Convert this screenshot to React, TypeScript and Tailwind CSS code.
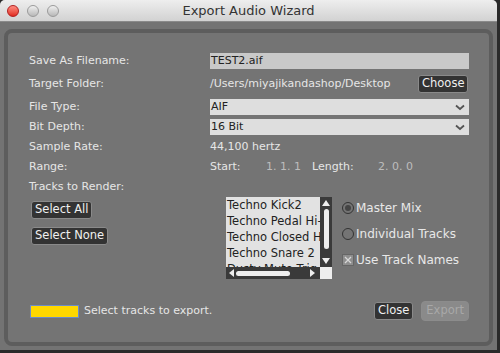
import React from 'react';

const font = { fontFamily: '"DejaVu Sans", "Liberation Sans", sans-serif' };

const Chevron = () => (
  <svg width="10" height="7" viewBox="0 0 10 7" className="mr-[3px]">
    <path d="M1 1.5 L5 5 L9 1.5" stroke="#555" strokeWidth="1.8" fill="none" />
  </svg>
);

const Label = ({ children }: any) => (
  <div className="w-[181px] shrink-0 text-[#e6e6e6]">{children}</div>
);

const DarkButton = ({ children, className = '' }: any) => (
  <div
    className={
      'flex h-[18px] items-center rounded-[3px] border border-[#8a8a8a] bg-[#333333] px-[3px] text-[11.5px] text-[#f0f0f0] ' +
      className
    }
  >
    {children}
  </div>
);

const Radio = ({ on, children }: any) => (
  <div className="flex h-[14px] items-center gap-[2px] text-[#e8e8e8]">
    <div className="flex h-[12px] w-[12px] items-center justify-center rounded-full border-[1.5px] border-[#333]">
      {on && <div className="h-[6px] w-[6px] rounded-full bg-[#444]" />}
    </div>
    <span>{children}</span>
  </div>
);

export default function App() {
  const tracks = ['Techno Kick2', 'Techno Pedal Hi-Hat', 'Techno Closed Hi-Hat', 'Techno Snare 2', 'Dusty Mute Trig'];

  return (
    <div className="h-[353px] w-[500px] overflow-hidden bg-[#2a2a2a] text-[11px]" style={font}>
      <div className="h-[350px] w-[497px] overflow-hidden rounded-t-[5px] bg-[#737373]">
        {/* title bar */}
        <div className="relative flex h-[22px] items-center justify-center border-b border-[#8a8a8a] bg-gradient-to-b from-[#eeeeee] to-[#d2d2d2]">
          <div className="absolute left-[7px] top-[5px] flex gap-[8px]">
            <div className="h-[12px] w-[12px] rounded-full border border-[#b02020] bg-gradient-to-b from-[#ff8a80] to-[#e0271d]" />
            <div className="h-[12px] w-[12px] rounded-full border border-[#9a9a9a] bg-gradient-to-b from-[#f0f0f0] to-[#b8b8b8]" />
            <div className="h-[12px] w-[12px] rounded-full border border-[#9a9a9a] bg-gradient-to-b from-[#f0f0f0] to-[#b8b8b8]" />
          </div>
          <span className="text-[13px] text-[#333]">Export Audio Wizard</span>
        </div>

        {/* body */}
        <div className="px-[4px] pt-[7px]">
          <div className="h-[317px] rounded-[8px] border-[4px] border-[#5d5d5d] bg-[#747474] pl-[21px] pt-[20px]">
            <div className="flex h-[16px] items-center">
              <Label>Save As Filename:</Label>
              <div className="flex h-[16px] w-[259px] items-center bg-[#c9c9c9] px-[1px] text-[#222]">TEST2.aif</div>
            </div>
            <div className="mt-[6px] flex h-[18px] items-center">
              <Label>Target Folder:</Label>
              <div className="w-[208px] text-[#e6e6e6]">/Users/miyajikandashop/Desktop</div>
              <DarkButton>Choose</DarkButton>
            </div>
            <div className="mt-[6px] flex h-[16px] items-center">
              <Label>File Type:</Label>
              <div className="flex h-[16px] w-[259px] items-center justify-between bg-[#dedede] px-[1px] text-[#222]">
                AIF
                <Chevron />
              </div>
            </div>
            <div className="mt-[4px] flex h-[16px] items-center">
              <Label>Bit Depth:</Label>
              <div className="flex h-[16px] w-[259px] items-center justify-between bg-[#dedede] px-[1px] text-[#222]">
                16 Bit
                <Chevron />
              </div>
            </div>
            <div className="mt-[4px] flex h-[16px] items-center">
              <Label>Sample Rate:</Label>
              <div className="text-[#e6e6e6]">44,100 hertz</div>
            </div>
            <div className="mt-[4px] flex h-[16px] items-center">
              <Label>Range:</Label>
              <div className="flex text-[#e6e6e6]">
                <span className="w-[56px]">Start:</span>
                <span className="w-[46px] text-[#bdbdbd]">1. 1. 1</span>
                <span className="w-[66px]">Length:</span>
                <span className="text-[#bdbdbd]">2. 0. 0</span>
              </div>
            </div>
            <div className="mt-[4px] flex h-[16px] items-center">
              <Label>Tracks to Render:</Label>
            </div>

            <div className="mt-[2px] flex">
              <div className="w-[197px] shrink-0 pl-[2px] pt-[4px]">
                <DarkButton className="w-fit">Select All</DarkButton>
                <DarkButton className="mt-[8px] w-fit">Select None</DarkButton>
              </div>

              {/* track list */}
              <div className="relative h-[82px] w-[106px] shrink-0 overflow-hidden bg-[#e2e2e2]">
                <div className="w-[94px] overflow-hidden whitespace-nowrap pl-[1px] text-[11.5px] leading-[16px] text-[#222]">
                  {tracks.map((t) => (
                    <div key={t}>{t}</div>
                  ))}
                </div>
                <div className="absolute right-0 top-0 flex h-[70px] w-[12px] flex-col items-center bg-[#3a3a3a]">
                  <svg width="8" height="6" viewBox="0 0 8 6" className="mt-[3px]">
                    <path d="M0 6 L4 0 L8 6 Z" fill="#eee" />
                  </svg>
                  <div className="mt-[3px] h-[40px] w-[5px] rounded-full bg-[#eee]" />
                  <svg width="8" height="6" viewBox="0 0 8 6" className="mt-auto mb-[3px]">
                    <path d="M0 0 L4 6 L8 0 Z" fill="#eee" />
                  </svg>
                </div>
                <div className="absolute bottom-0 left-0 flex h-[12px] w-[94px] items-center bg-[#3a3a3a] px-[3px]">
                  <svg width="5" height="8" viewBox="0 0 5 8">
                    <path d="M5 0 L0 4 L5 8 Z" fill="#eee" />
                  </svg>
                  <div className="ml-[2px] h-[5px] w-[54px] rounded-full bg-[#eee]" />
                  <svg width="5" height="8" viewBox="0 0 5 8" className="ml-auto mr-[2px]">
                    <path d="M0 0 L5 4 L0 8 Z" fill="#eee" />
                  </svg>
                </div>
                <div className="absolute bottom-0 right-0 h-[12px] w-[12px] bg-[#eeeeee]" />
              </div>

              <div className="ml-[10px] flex flex-col gap-[12px] pt-[4px] text-[12px]">
                <Radio on>Master Mix</Radio>
                <Radio>Individual Tracks</Radio>
                <div className="flex h-[14px] items-center gap-[2px] text-[#e8e8e8]">
                  <div className="flex h-[12px] w-[12px] items-center justify-center border border-[#666] bg-[#8e8e8e]">
                    <svg width="8" height="8" viewBox="0 0 8 8">
                      <path d="M1 1 L7 7 M7 1 L1 7" stroke="#d8d8d8" strokeWidth="1.3" />
                    </svg>
                  </div>
                  <span>Use Track Names</span>
                </div>
              </div>
            </div>

            {/* footer */}
            <div className="mt-[22px] flex h-[20px] items-center pr-[20px]">
              <div className="ml-[1px] h-[13px] w-[49px] border border-[#6d8cc8] bg-[#ffd800]" />
              <span className="ml-[5px] text-[#e6e6e6]">Select tracks to export.</span>
              <DarkButton className="ml-auto">Close</DarkButton>
              <div className="ml-[8px] flex h-[20px] items-center rounded-[4px] border border-[#8c8c8c] bg-[#8a8a8a] px-[4px] text-[11.5px] text-[#a8a8a8]">
                Export
              </div>
            </div>
          </div>
        </div>
      </div>
    </div>
  );
}
